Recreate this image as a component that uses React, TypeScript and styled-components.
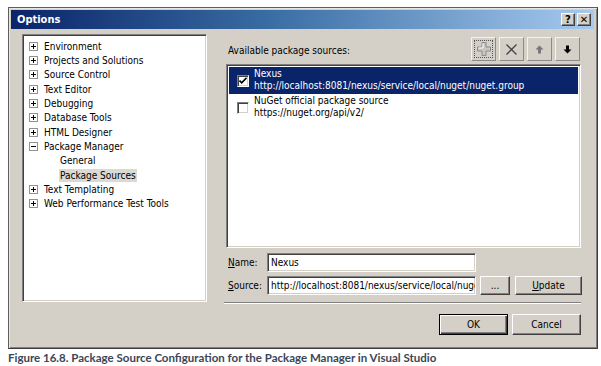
import React from "react";
import styled, { createGlobalStyle, css } from "styled-components";

const Global = createGlobalStyle`
  html, body { margin: 0; padding: 0; background: #ffffff; }
  body {
    font-family: "DejaVu Sans Condensed", "DejaVu Sans", sans-serif;
    font-size: 10px;
    color: #000;
  }
  * { box-sizing: border-box; }
`;

const Page = styled.div`
  width: 601px;
  height: 366px;
  padding: 7px 0 0 8px;
  background: #fff;
  overflow: hidden;
`;

const Window = styled.div`
  width: 590px;
  height: 342px;
  background: #d4d0c8;
  border: 1px solid #5e5e5e;
  border-right-color: #3c3c3c;
  border-bottom-color: #3c3c3c;
  box-shadow: inset 1px 1px 0 #e8e6e0, inset -1px -1px 0 #808080;
  padding: 2px 3px 3px 2px;
  display: flex;
  flex-direction: column;
`;

const TitleBar = styled.div`
  height: 19px;
  background: linear-gradient(to right, #0a246a 0%, #3a6ea5 45%, #a6caf0 100%);
  display: flex;
  align-items: center;
  justify-content: space-between;
  padding: 0 3px 0 6px;
`;

const Title = styled.span`
  color: #fff;
  font-weight: bold;
  font-size: 11px;
`;

const TitleButtons = styled.div`
  display: flex;
  gap: 2px;
`;

const TitleButton = styled.div`
  background: #d4d0c8;
  border: 1px solid;
  border-color: #ffffff #404040 #404040 #ffffff;
  box-shadow: inset -1px -1px 0 #808080;
  width: 14px;
  height: 13px;
  display: flex;
  align-items: center;
  justify-content: center;
  font-weight: bold;
  font-size: 10px;
  line-height: 1;
  color: #000;
  font-family: "DejaVu Sans", sans-serif;
`;

const Body = styled.div`
  display: flex;
  padding: 5px 13px 0 11px;
  gap: 19px;
`;

const sunken = css`
  background: #fff;
  border: 1px solid;
  border-color: #808080 #ffffff #ffffff #808080;
  box-shadow: inset 1px 1px 0 #404040, inset -1px -1px 0 #d4d0c8;
`;

const Tree = styled.div`
  ${sunken};
  width: 186px;
  height: 268px;
  padding: 4px 0 0 6px;
  display: flex;
  flex-direction: column;
`;

const TreeRow = styled.div<{ $level: number }>`
  height: 14.35px;
  display: flex;
  align-items: center;
  padding-left: ${(p) => (p.$level === 0 ? 0 : 30)}px;
  white-space: nowrap;
`;

const Expander = styled.span`
  width: 9px;
  height: 9px;
  border: 1px solid #919191;
  background: #fff;
  margin-right: 5px;
  position: relative;
  flex: none;
`;

const ExpH = styled.span`
  position: absolute;
  left: 1px;
  top: 3px;
  width: 5px;
  height: 1px;
  background: #000;
`;

const ExpV = styled.span`
  position: absolute;
  left: 3px;
  top: 1px;
  width: 1px;
  height: 5px;
  background: #000;
`;

const TreeLabel = styled.span<{ $selected?: boolean }>`
  padding: 0 1px;
  line-height: 13px;
  ${(p) => p.$selected && css`background: #dcd9d2;`}
`;

const Right = styled.div`
  width: 355px;
  display: flex;
  flex-direction: column;
`;

const HeaderRow = styled.div`
  display: flex;
  align-items: center;
  justify-content: space-between;
  height: 24px;
  margin-top: 3px;
`;

const SectionLabel = styled.span`
  padding-left: 2px;
  padding-top: 2px;
`;

const Toolbar = styled.div`
  display: flex;
  gap: 3px;
  padding-right: 1px;
`;

const ToolButton = styled.div<{ $focused?: boolean }>`
  width: 25px;
  height: 24px;
  background: #d4d0c8;
  border: 1px solid;
  border-color: #f4f3ef #8a8a8a #8a8a8a #f4f3ef;
  display: flex;
  align-items: center;
  justify-content: center;
  position: relative;
  ${(p) =>
    p.$focused &&
    css`
      &::after {
        content: "";
        position: absolute;
        inset: 2px;
        border: 1px dotted #555;
      }
    `}
`;

const List = styled.div`
  ${sunken};
  margin-top: 3px;
  height: 184px;
  padding: 2px;
`;

const ListItem = styled.div<{ $selected?: boolean }>`
  height: 27px;
  display: flex;
  align-items: center;
  padding-left: 8px;
  background: ${(p) => (p.$selected ? "#0a246a" : "transparent")};
  color: ${(p) => (p.$selected ? "#fff" : "#000")};
`;

const Check = styled.span`
  width: 12px;
  height: 12px;
  flex: none;
  background: #fff;
  border: 1px solid;
  border-color: #808080 #ffffff #ffffff #808080;
  box-shadow: inset 1px 1px 0 #404040, inset -1px -1px 0 #d4d0c8;
  display: flex;
  align-items: center;
  justify-content: center;
  margin-right: 5px;
`;

const ItemText = styled.div`
  display: flex;
  flex-direction: column;
  line-height: 12px;
  margin-top: -1px;
`;

const FormRow = styled.div<{ $top: number }>`
  display: flex;
  align-items: center;
  margin-top: ${(p) => p.$top}px;
  height: 19px;
`;

const FieldLabel = styled.span`
  width: 41px;
  padding-left: 2px;
  flex: none;
`;

const Input = styled.input`
  ${sunken};
  width: 209px;
  height: 19px;
  padding: 0 0 0 3px;
  margin: 0;
  font: inherit;
  color: #000;
  outline: none;
  flex: none;
`;

const PushButton = styled.div<{ $w: number; $h?: number; $gap?: number; $default?: boolean }>`
  width: ${(p) => p.$w}px;
  height: ${(p) => p.$h ?? 19}px;
  margin-left: ${(p) => p.$gap ?? 0}px;
  background: #d4d0c8;
  border: 1px solid;
  border-color: #ffffff #404040 #404040 #ffffff;
  box-shadow: inset -1px -1px 0 #808080;
  display: flex;
  align-items: center;
  justify-content: center;
  flex: none;
  ${(p) =>
    p.$default &&
    css`
      border: 1px solid #000;
      box-shadow: inset 1px 1px 0 #fff, inset -1px -1px 0 #404040, inset -2px -2px 0 #808080;
    `}
`;

const Separator = styled.div`
  margin-top: 7px;
  margin-left: -2px;
  height: 2px;
  border-top: 1px solid #808080;
  border-bottom: 1px solid #ffffff;
`;

const Footer = styled.div`
  display: flex;
  justify-content: flex-end;
  gap: 4px;
  margin-top: 10px;
`;

const U = styled.span`
  text-decoration: underline;
`;

const Caption = styled.div`
  margin-top: 2px;
  font-family: "Lato", "Open Sans", sans-serif;
  font-weight: bold;
  font-size: 11.5px;
  color: #3b4656;
`;

const PlusIcon = () => (
  <svg width="16" height="16" viewBox="0 0 16 16">
    <path
      d="M6 1.5h4v4.5h4.5v4h-4.5v4.5h-4v-4.5h-4.5v-4h4.5z"
      fill="#c8c6c0"
      stroke="#8c8c8c"
      strokeWidth="1"
    />
    <path d="M7 2.5v4.5h-4.5" fill="none" stroke="#ffffff" strokeWidth="1" />
  </svg>
);

const XIcon = () => (
  <svg width="13" height="13" viewBox="0 0 13 13">
    <path d="M1.5 1.5l10 10M11.5 1.5l-10 10" stroke="#444" strokeWidth="1.3" />
  </svg>
);

const ArrowIcon = ({ down, color }: { down?: boolean; color: string }) => (
  <svg width="9" height="9" viewBox="0 0 9 9" style={{ transform: down ? "rotate(180deg)" : undefined }}>
    <path d="M4.5 0.5L8.5 4.5H6v4H3v-4H0.5z" fill={color} />
  </svg>
);

const CheckMark = () => (
  <svg width="8" height="8" viewBox="0 0 8 8">
    <path d="M0.5 3.5l2.2 2.3 4.8-5" fill="none" stroke="#000" strokeWidth="1.7" />
  </svg>
);

type Node = { label: string; level: number; expander?: "plus" | "minus"; selected?: boolean };

const nodes: Node[] = [
  { label: "Environment", level: 0, expander: "plus" },
  { label: "Projects and Solutions", level: 0, expander: "plus" },
  { label: "Source Control", level: 0, expander: "plus" },
  { label: "Text Editor", level: 0, expander: "plus" },
  { label: "Debugging", level: 0, expander: "plus" },
  { label: "Database Tools", level: 0, expander: "plus" },
  { label: "HTML Designer", level: 0, expander: "plus" },
  { label: "Package Manager", level: 0, expander: "minus" },
  { label: "General", level: 1 },
  { label: "Package Sources", level: 1, selected: true },
  { label: "Text Templating", level: 0, expander: "plus" },
  { label: "Web Performance Test Tools", level: 0, expander: "plus" },
];

export default function App() {
  return (
    <>
      <Global />
      <Page>
        <Window>
          <TitleBar>
            <Title>Options</Title>
            <TitleButtons>
              <TitleButton>?</TitleButton>
              <TitleButton>✕</TitleButton>
            </TitleButtons>
          </TitleBar>
          <Body>
            <Tree>
              {nodes.map((n) => (
                <TreeRow key={n.label} $level={n.level}>
                  {n.expander && (
                    <Expander>
                      <ExpH />
                      {n.expander === "plus" && <ExpV />}
                    </Expander>
                  )}
                  <TreeLabel $selected={n.selected}>{n.label}</TreeLabel>
                </TreeRow>
              ))}
            </Tree>
            <Right>
              <HeaderRow>
                <SectionLabel>Available package sources:</SectionLabel>
                <Toolbar>
                  <ToolButton $focused>
                    <PlusIcon />
                  </ToolButton>
                  <ToolButton>
                    <XIcon />
                  </ToolButton>
                  <ToolButton>
                    <ArrowIcon color="#777" />
                  </ToolButton>
                  <ToolButton>
                    <ArrowIcon down color="#000" />
                  </ToolButton>
                </Toolbar>
              </HeaderRow>
              <List>
                <ListItem $selected>
                  <Check>
                    <CheckMark />
                  </Check>
                  <ItemText>
                    <span>Nexus</span>
                    <span>http://localhost:8081/nexus/service/local/nuget/nuget.group</span>
                  </ItemText>
                </ListItem>
                <ListItem>
                  <Check />
                  <ItemText>
                    <span>NuGet official package source</span>
                    <span>https://nuget.org/api/v2/</span>
                  </ItemText>
                </ListItem>
              </List>
              <FormRow $top={5}>
                <FieldLabel>
                  <U>N</U>ame:
                </FieldLabel>
                <Input readOnly value="Nexus" />
              </FormRow>
              <FormRow $top={4}>
                <FieldLabel>
                  <U>S</U>ource:
                </FieldLabel>
                <Input readOnly value="http://localhost:8081/nexus/service/local/nuget/nuget.group" />
                <PushButton $w={30} $gap={4}>...</PushButton>
                <PushButton $w={67} $gap={5}>
                  <U>U</U>pdate
                </PushButton>
              </FormRow>
              <Separator />
              <Footer>
                <PushButton $w={69} $h={21} $default>
                  OK
                </PushButton>
                <PushButton $w={69} $h={21}>
                  Cancel
                </PushButton>
              </Footer>
            </Right>
          </Body>
        </Window>
        <Caption>Figure 16.8. Package Source Configuration for the Package Manager in Visual Studio</Caption>
      </Page>
    </>
  );
}
